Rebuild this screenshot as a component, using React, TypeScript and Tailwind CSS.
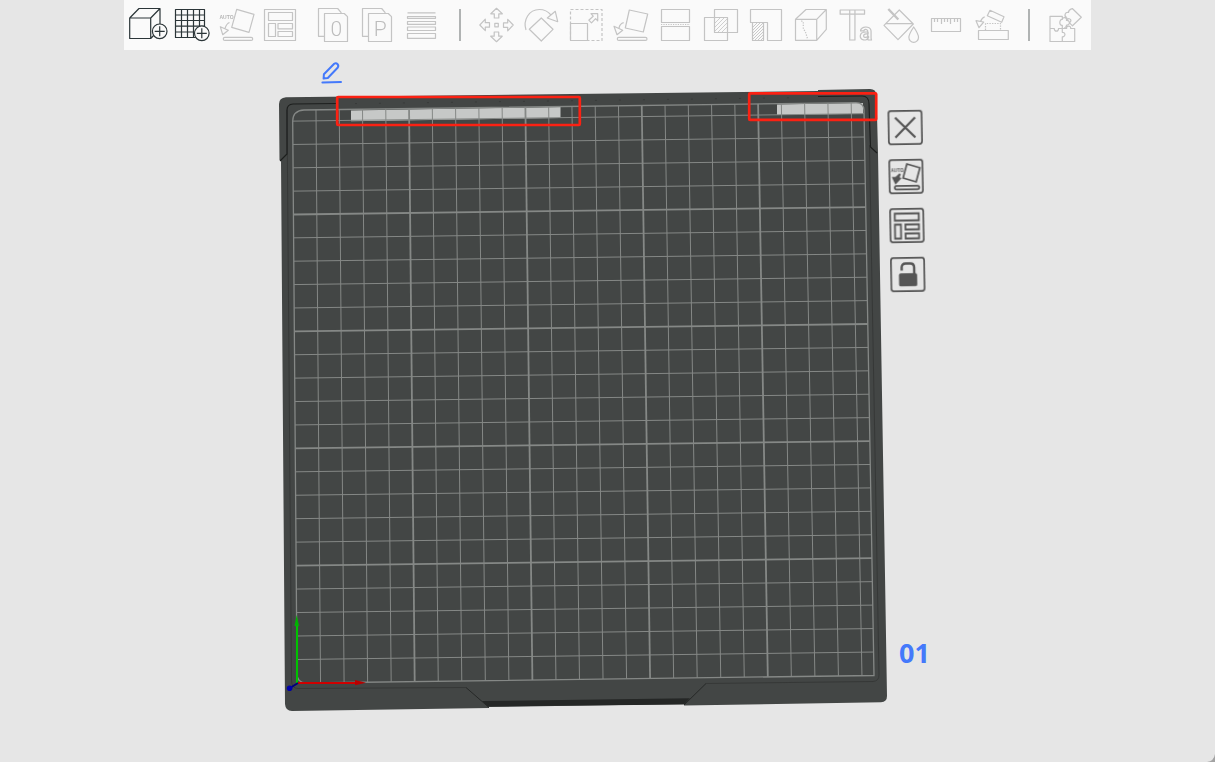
import type { ReactNode } from "react";

type Tool = { name: string; art: ReactNode; active?: boolean };

const plusBadge = (x: number, y: number) => (
  <>
    <circle cx={x} cy={y} r="7.3" fill="#fafafa" />
    <path d={`M${x - 5} ${y}h10M${x} ${y - 5}v10`} />
  </>
);

const sheets = (letter: string) => (
  <>
    <path d="M13.3 36.3H7.5V8.5H26.7L30.4 12.8" />
    <path d="M13.5 13.5H33.3L36.5 16.7V41.5H13.5Z" />
    <text x="25.3" y="35.5" fontSize="21" fontWeight="300" textAnchor="middle" stroke="none" fill="#bdbdbd" fontFamily="Roboto, sans-serif">
      {letter}
    </text>
  </>
);

const moveArrow = "M22.5 8.3L28.3 13.8H24.8V18H20.3V13.8H16.8Z";

const fileTools: Tool[] = [
  {
    name: "Add model",
    active: true,
    art: (
      <>
        <path d="M3.7 18H24.7V38.5H3.7ZM3.7 18L13 8.5H34L24.7 18M34 8.5V24M24.7 38.5L29 34" />
        {plusBadge(33.7, 31.3)}
      </>
    ),
  },
  {
    name: "Add plate",
    active: true,
    art: (
      <>
        <path d="M5.5 9.5H34.5V37.5H5.5ZM11.5 9.5V37.5M17.5 9.5V37.5M23.5 9.5V37.5M29.5 9.5V37.5M5.5 15H34.5M5.5 20.5H34.5M5.5 26.2H34.5M5.5 32H34.5" />
        {plusBadge(31.8, 33.3)}
      </>
    ),
  },
  {
    name: "Auto orient",
    art: (
      <>
        <text x="5.5" y="19" fontSize="5" fontWeight="700" stroke="none" fill="#b5b5b5" fontFamily="Liberation Sans, sans-serif">
          AUTO
        </text>
        <path d="M22.7 9.3L40 14.3L35 32.3L17.7 27.3ZM15.5 22.5Q12.5 23.5 11 28.5M6.3 26.7L14.3 30.2L8.7 34.7Z" />
        <rect x="9.3" y="37.4" width="29.4" height="3" rx="1.5" />
      </>
    ),
  },
  {
    name: "Arrange",
    art: <path d="M6.5 9.5H37.5V40.5H6.5ZM10.5 12.5H34.5V20.5H10.5ZM10.5 23.5H17.5V36.5H10.5ZM20 23.5H34.5V28.8H20ZM20 31.5H34.5V36.5H20Z" />,
  },
];

const objectTools: Tool[] = [
  { name: "Split to objects", art: sheets("0") },
  { name: "Split to parts", art: sheets("P") },
  {
    name: "Variable layer height",
    art: <path d="M8.5 12.8H36.5M8.5 16.5H36.5V18.3H8.5ZM8.5 21.5H36.5V24.3H8.5ZM8.5 27H36.5V30.5H8.5ZM8.5 33.5H36.5V38.3H8.5Z" />,
  },
];

const editTools: Tool[] = [
  {
    name: "Move",
    art: (
      <>
        <rect x="20.8" y="23.3" width="3.5" height="3.5" />
        <path d={moveArrow} />
        <path d={moveArrow} transform="rotate(90 22.5 25)" />
        <path d={moveArrow} transform="rotate(180 22.5 25)" />
        <path d={moveArrow} transform="rotate(270 22.5 25)" />
      </>
    ),
  },
  {
    name: "Rotate",
    art: <path d="M22.3 18L34 29.3L22.3 41L10.3 29.3ZM7 30C3.8 20 10 9.5 20.3 9.5Q27.5 9.5 32 15M36.3 11.3L38.7 21.7L28.3 18Z" />,
  },
  {
    name: "Scale",
    art: (
      <>
        <rect x="6.5" y="9.5" width="31.5" height="31" strokeDasharray="3 2" />
        <path d="M6.5 23.5H23.5V40.5H6.5ZM33.7 13.7H27L29.2 16.2L24.8 20.2L27.5 22.9L31.6 18.6L33.7 20.8Z" />
      </>
    ),
  },
  {
    name: "Place on face",
    art: (
      <>
        <path d="M20.3 10L38.7 14L34.3 32L16.3 28ZM14.7 22.7Q11 23.5 10 28M5 26.3L13.7 30.3L8 34.7Z" />
        <rect x="8.3" y="37.4" width="29.7" height="3" rx="1.5" />
      </>
    ),
  },
  {
    name: "Cut",
    art: (
      <>
        <path d="M7.5 9.5H35.5V22.5H7.5ZM7.5 26.5H35.5V40.5H7.5Z" />
        <path d="M7 24.5H36" strokeDasharray="1.2 1.2" />
      </>
    ),
  },
  {
    name: "Mesh boolean",
    art: (
      <>
        <path d="M15.5 9.5H38.5V32.5H15.5ZM5.5 17.5H28.5V40.5H5.5Z" />
        <path d="M16 23L21 18M16 27L25 18M16 31L28 19M19 32L28 23M23 32L28 27" strokeWidth="0.8" />
      </>
    ),
  },
  {
    name: "Support painting",
    art: (
      <>
        <path d="M6.5 22.5V9.5H37.5V40.5H23.5V22.5ZM8.5 22.5H19.5V40.5H8.5Z" />
        <path d="M9 27L13 23M9 30L16 23M9 33L19 23M9 36L19 26M9 39L19 29M11 40L19 32M14 40L19 35M17 40L19 38" strokeWidth="0.9" />
      </>
    ),
  },
  {
    name: "Seam painting",
    art: (
      <>
        <path d="M6.5 19.3H27.7V40.3H6.5ZM6.5 19.3L17 9.5H37.3L27.7 19.3M37.3 9.5V29.3L27.7 40.3" />
        <path d="M12.3 20.7L14.3 22V28.3L16.7 32.7L18.7 39.3" strokeDasharray="1.3 1.3" />
      </>
    ),
  },
  {
    name: "Text",
    art: (
      <text x="5.3" y="40.3" fontSize="43" fontWeight="500" fontFamily="Roboto, sans-serif" fill="#fafafa" strokeWidth="1.2">
        T
        <tspan dx="-6" fontSize="24" fontWeight="700">
          a
        </tspan>
      </text>
    ),
  },
  {
    name: "Color painting",
    art: (
      <>
        <path d="M20.3 10L34.3 24L19 39.7L5 25.3ZM6.3 23.7H34.3" />
        <path d="M34.7 27Q39.5 34 39.5 37.5A4.8 4.8 0 0 1 29.9 37.5Q29.9 34 34.7 27Z" fill="#fafafa" />
        <path d="M9.3 9L19.3 19.5" strokeWidth="2.4" />
      </>
    ),
  },
  {
    name: "Measure",
    art: <path d="M7.5 18.5H36.5V31.5H7.5ZM10.5 18.5V22M13.5 18.5V22M17.5 18.5V24M20.5 18.5V22M23.5 18.5V22M26.5 18.5V24M30.5 18.5V22M33.5 18.5V22" />,
  },
  {
    name: "Assemble",
    art: (
      <>
        <path d="M9.5 30.5H39.3V39.5H9.5ZM21 10.3L35 16.7L32.7 22.3L18.3 15.7ZM15.7 16.7Q12 18.5 11.5 22M7 20.7L14.7 22L10 27.7Z" />
        <path d="M16.5 30V23.5H31.5V30" strokeDasharray="1.4 1.2" />
      </>
    ),
  },
];

const assemblyTools: Tool[] = [
  {
    name: "Assembly view",
    art: (
      <path d="M20.3 19.5V16.3H8V41.5H32.7V28.5H28.7C29 25.3 24.3 25.3 24.6 28.5H20.3V25.3C17 26 17 19 20.3 19.5C20.3 16.8 25.2 17 24.5 20.5C28.3 20 28.3 25.5 24.6 25C24.6 26.5 23.5 27.7 22 28.5M8 28.5H12.3C12 32 16.8 32 16.5 28.5H20.3V32.3C23.8 32 23.8 37 20.3 36.8V41.5M24.5 17.5C21.5 15.5 23.5 11.5 26.5 12.5C26.5 9.5 28.5 9.3 30.3 8.5L39.3 17.3L30.5 25.8L27.5 22.8C30.5 21 28 17.3 25.5 19.3L24.5 17.5" />
    ),
  },
];

function ToolGroup({ tools, wide }: { tools: Tool[]; wide?: boolean }) {
  return (
    <div className="flex shrink-0">
      {tools.map((tool) => (
        <button
          key={tool.name}
          type="button"
          aria-label={tool.name}
          disabled={!tool.active}
          className={wide ? "h-[50px] w-[45px]" : "h-[50px] w-11"}
        >
          <svg
            viewBox={wide ? "0 0 45 50" : "0 0 44 50"}
            className={tool.active ? "block size-full stroke-[#2b3538]" : "block size-full stroke-[#c4c4c4] will-change-transform"}
            fill="none"
            strokeWidth="1.2"
            strokeLinejoin="round"
          >
            {tool.art}
          </svg>
        </button>
      ))}
    </div>
  );
}

// Plate corners in scene coordinates; the camera is slightly tilted.
const topY = 110;
const bottomY = 682;
const columns = Array.from({ length: 24 }, (_, i) => i + 1);

function columnLine(i: number) {
  const lift = i * 0.306;
  return { x1: 292.7 + i * 23.27, y1: topY - lift, x2: 297 + i * 23.54, y2: bottomY + 1 - lift };
}

function rowLine(i: number) {
  return {
    x1: 297 - i * 0.17,
    y1: 683 - i * 23.5 + (i * i) / 270,
    x2: 874 - i * 0.42,
    y2: 675.5 - i * 23.47 + (i * i) / 400,
  };
}

function BuildPlate() {
  return (
    <svg viewBox="279 50 610 712" className="block h-[712px] w-[610px]" role="img" aria-label="Build plate 01">
      <path
        d="M286 97.3L818 91V90L870 89Q876 89 876.5 95L878 153L887 696Q887 702 881 702.3L684 705.5V704L489 707V708L292 711Q285.5 711 285 704L281 160H279.5L279 104Q279 98 286 97.3Z"
        fill="#434645"
      />
      <path d="M482 701L690 698.3L684 704.5L488 706.5Z" fill="#252726" />
      <path d="M466 687.5L489 707.5M706 683.5L684 705" stroke="#262827" fill="none" />
      <path
        d="M287 110L291.5 680Q291.5 688.5 298 688.5L466 687.5M706 683.5L873 681.5Q879 681 879 675L869.5 145"
        stroke="#363837"
        fill="none"
      />
      <path d="M337 103.5L293 104Q287 104.5 287 110V154L280 161" stroke="#1d1f1e" fill="none" strokeWidth="1.2" />
      <path d="M818 96.5L862 96Q869 96 869 104L870.5 147L877 153" stroke="#1d1f1e" fill="none" strokeWidth="1.2" />
      <path d="M355 103.6L810 97.5" stroke="#383a39" strokeDasharray="2 22" />

      <path d="M351 110.5L560.5 107V118L351 121.3Z" fill="#c6c8c7" />
      <path d="M777 104.5L863 103V113.7L777 115Z" fill="#c6c8c7" />

      <g stroke="#858886" fill="none">
        {columns.map((i) => (
          <line key={i} {...columnLine(i)} strokeWidth={i % 5 === 0 ? 1.8 : 1} />
        ))}
        {columns.map((i) => (
          <line key={i} {...rowLine(i)} strokeWidth={i % 5 === 0 ? 1.8 : 1} />
        ))}
        <path d="M304 110L856 102.6Q863.5 102.6 864 110L874 675.5L306 683Q297 682.5 297 674L292.7 121Q293 110.5 304 110Z" strokeWidth="1.3" />
      </g>

      <g fill="none" stroke="#fb2113" strokeWidth="2.7">
        <rect x="337.2" y="97" width="242.6" height="28" rx="1" />
        <rect x="749.2" y="93.3" width="127" height="26.6" rx="1" />
      </g>

      <path d="M297 683V625" stroke="#00c400" strokeWidth="2" />
      <path d="M296.7 615L299 626H294.5Z" fill="#00b400" />
      <path d="M298 683H357" stroke="#cf0000" strokeWidth="2" />
      <path d="M366 682.7L355 680V685.2Z" fill="#b80000" />
      <path d="M298 683L290 688" stroke="#00007c" strokeWidth="2" />
      <circle cx="289.6" cy="688.3" r="2.8" fill="#0000a8" />
    </svg>
  );
}

const plateActions: { name: string; art: ReactNode }[] = [
  { name: "Remove plate", art: <path d="M7.5 7.5L27.5 27.5M27.5 7.5L7.5 27.5" strokeWidth="2.2" /> },
  {
    name: "Auto orient plate",
    art: (
      <>
        <text x="2.5" y="12.5" fontSize="4.5" fontWeight="700" stroke="none" fill="#555" fontFamily="Liberation Sans, sans-serif">
          AUTO
        </text>
        <path d="M18.5 5L31.5 9L27.5 23L14.5 19Z" />
        <path d="M4.5 18.5L7.5 18.5L11.5 15L10 18.5L11.5 19.5L7 24Z" fill="#555" />
        <rect x="6" y="26.8" width="24.5" height="3.6" rx="1.8" />
      </>
    ),
  },
  {
    name: "Arrange plate",
    art: <path d="M5.5 5.5H29.5V12.5H5.5ZM5.5 16.5H11.5V30.5H5.5ZM16 16.5H29.5V21.5H16ZM16 25.5H29.5V30.5H16Z" strokeWidth="1.8" />,
  },
  {
    name: "Lock plate",
    art: (
      <>
        <path d="M11.5 13.5V10.5Q11.5 6.5 15.5 6.5H20Q24 6.5 24 10.5V17" strokeWidth="2.4" />
        <rect x="9.5" y="17" width="16.5" height="11.5" rx="1" fill="#555" />
      </>
    ),
  },
];

export default function App() {
  return (
    <div className="relative flex min-h-screen flex-col overflow-hidden bg-[#e6e6e6] font-['Open_Sans',sans-serif]">
      <header className="mx-auto flex w-full max-w-[967px] items-center bg-[#fafafa] px-0.5">
        <ToolGroup tools={fileTools} />
        <div className="w-[9px] shrink-0" />
        <ToolGroup tools={objectTools} />
        <div className="mr-[13px] ml-4 h-8 w-0.5 shrink-0 bg-[#b0b3b3]" />
        <ToolGroup tools={editTools} wide />
        <div className="mr-3 ml-3.5 h-8 w-0.5 shrink-0 bg-[#b0b3b3]" />
        <ToolGroup tools={assemblyTools} />
      </header>

      <main className="flex justify-center">
        <div className="relative shrink-0">
          <BuildPlate />
          <button type="button" aria-label="Edit plate name" className="absolute top-2.5 left-10">
            <svg viewBox="0 0 24 24" className="block size-6" fill="none" stroke="#4479fb" strokeWidth="2" strokeLinejoin="round" strokeLinecap="round">
              <path d="M4.6 18.6L4.9 14.2L15.2 3.8Q17 2.5 18.6 4.2Q20 6 18.6 7.8L8.8 18Z" />
              <path d="M3.4 22.4L22 22" />
            </svg>
          </button>
        </div>
        <aside className="w-[47px] shrink-0 pt-[60px]">
          <div className="flex w-[35px] -rotate-1 flex-col gap-3.5 will-change-transform">
            {plateActions.map((action) => (
              <button key={action.name} type="button" aria-label={action.name} className="size-[35px]">
                <svg viewBox="0 0 35 35" className="block size-full" fill="none" stroke="#555" strokeWidth="1.7">
                  <rect x="0.9" y="0.9" width="33.2" height="33.2" rx="2.5" />
                  {action.art}
                </svg>
              </button>
            ))}
          </div>
          <p className="mt-[347px] pl-2.5 text-[27px] leading-7 font-bold text-[#4479fb]">01</p>
        </aside>
      </main>

      <svg viewBox="0 0 8 8" className="absolute right-0 bottom-0 size-2" aria-hidden="true">
        <path d="M8 0Q7 7 0 8H8Z" fill="#a3a3a3" />
      </svg>
    </div>
  );
}
